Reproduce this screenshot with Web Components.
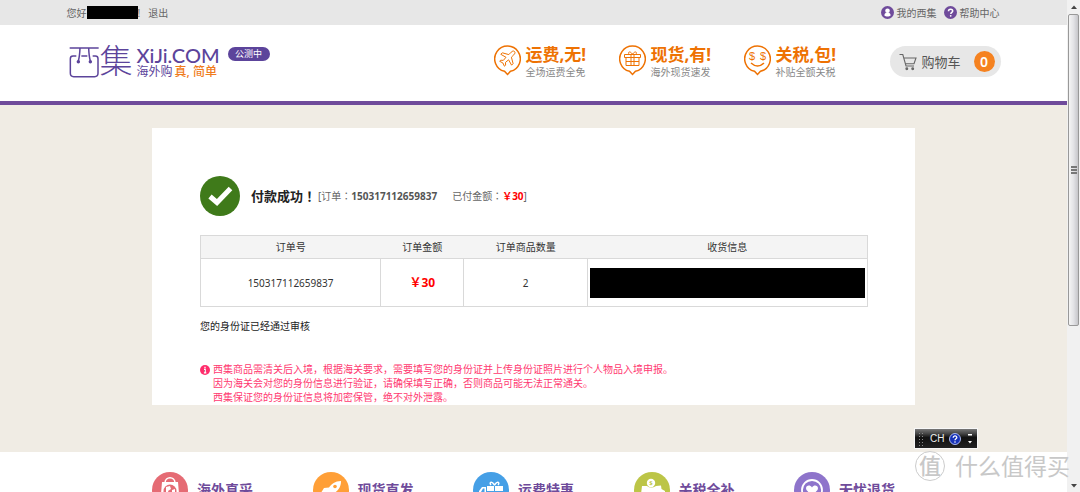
<!DOCTYPE html>
<html lang="zh-CN">
<head>
<meta charset="utf-8">
<title>西集 - 付款成功</title>
<style>
  html, body { margin: 0; height: 100%; }
  body { overflow: hidden; font-family: "Noto Sans", "Noto Sans CJK SC", sans-serif; font-size: 10px; line-height: 14px; color: #333; background: #fff; }
</style>
</head>
<body>
<xj-app></xj-app>
<script>
const define = (name, html) => customElements.define(name, class extends HTMLElement {
  constructor() {
    super();
    const t = document.createElement('template');
    t.innerHTML = html;
    this.attachShadow({ mode: 'open' }).append(t.content.cloneNode(true));
  }
});

define('xj-topbar', `
<style>
  :host { display: block; background: #e7e7e7; color: #666; }
  .in { max-width: 934px; height: 25px; margin: 0 auto; display: flex; align-items: center; }
  .mask { width: 51px; height: 13px; background: #000; }
  a { color: inherit; text-decoration: none; display: flex; align-items: center; gap: 3px; }
  .out { margin-left: 8px; margin-right: auto; }
  .help { margin-left: 7px; margin-right: 1px; }
  svg { width: 13px; height: 13px; }
</style>
<div class="in">
  <span>您好</span><span class="mask"></span><span>!</span>
  <a class="out" href="#">退出</a>
  <a href="#"><svg viewBox="0 0 13 13"><circle cx="6.5" cy="6.5" r="6.5" fill="#6f4b9b"/><circle cx="6.5" cy="4.8" r="2.3" fill="#fff"/><path d="M3.400 9.400c0-2.200 1.300-3 3.100-3s3.100.8 3.100 3c-1.400 1.400-4.800 1.400-6.200 0z" fill="#fff"/></svg><span>我的西集</span></a>
  <a class="help" href="#"><svg viewBox="0 0 13 13"><circle cx="6.500" cy="6.500" r="6.500" fill="#6f4b9b"/><path d="M4.500 5.200c0-2.800 4.200-2.600 4.200-.2 0 1.300-1.900 1.400-1.900 3" fill="none" stroke="#fff" stroke-width="1.500"/><circle cx="6.700" cy="9.800" r=".9" fill="#fff"/></svg><span>帮助中心</span></a>
</div>`);

define('xj-logo', `
<style>
  :host { display: block; color: #5c449b; }
  a { display: flex; color: inherit; text-decoration: none; }
  svg { width: 31px; height: 33px; }
  .ji { width: 32px; font-size: 33px; line-height: 32px; font-weight: 300; }
  .name { display: flex; flex-direction: column; margin-left: 5px; }
  .en { font: 500 20px/20px Lato, sans-serif; }
  .zh { font-size: 12px; line-height: 14px; display: flex; gap: 2px; }
  b { font-weight: 500; color: #f07c1c; }
  .beta { width: 42px; height: 14px; margin: 2px 0 0 8px; border-radius: 7px; background: #5c449b; color: #fff; font-size: 9px; line-height: 14px; text-align: center; }
</style>
<a href="#">
  <svg viewBox="0 0 93 99" fill="none" stroke="#5c449b" stroke-width="4.500"><path d="M2 9H89M33 9Q32 34 28 48M59 9Q60 34 64 48"/><path d="M22 33H12Q4 33 4 41V85Q4 95 14 95H77Q87 95 87 85V41Q87 33 79 33H71M37 33H55" /><circle cx="28" cy="50" r="3" fill="#5c449b"/><circle cx="64" cy="50" r="3" fill="#5c449b"/></svg>
  <span class="ji">集</span>
  <span class="name"><span class="en">XiJi.COM</span><span class="zh"><span>海外购</span><b>真, 简单</b></span></span>
  <span class="beta">公测中</span>
</a>`);

define('xj-feature', `
<style>
  :host { display: flex; gap: 5px; width: 93px; white-space: nowrap; }
  .t { display: flex; flex-direction: column; }
  .big { font-size: 17px; line-height: 20px; font-weight: 700; color: #ee7203; }
  .sub { color: #888; }
</style>
<slot name="icon"></slot>
<span class="t"><span class="big"><slot name="title"></slot></span><span class="sub"><slot></slot></span></span>`);

define('xj-cart', `
<style>
  :host { display: block; }
  a { box-sizing: border-box; width: 111px; height: 31px; padding: 0 6px 0 9px; border-radius: 16px; background: #e7e7e7; color: #555; display: flex; align-items: center; font-size: 13px; text-decoration: none; }
  svg { width: 18px; height: 18px; margin-right: 5px; }
  .n { width: 21px; height: 21px; margin-left: auto; border-radius: 50%; background: #f58220; color: #fff; font-size: 14px; font-weight: 600; line-height: 21px; text-align: center; }
</style>
<a href="#"><svg viewBox="0 0 18 18" fill="none" stroke="#666" stroke-width="1.100"><path d="M.5 1.500H3.800L7 13H15M4.800 5H17L15 10.800H6.300"/><circle cx="7.800" cy="15.800" r=".9" fill="#666"/><circle cx="13.700" cy="15.800" r=".9" fill="#666"/></svg><span>购物车</span><span class="n">0</span></a>`);

define('xj-header', `
<style>
  :host { display: block; background: #fff; border-bottom: 4px solid #6f4b9b; }
  .in { max-width: 932px; height: 76px; margin: 0 auto; padding-left: 2px; display: flex; align-items: flex-start; }
  xj-logo { margin-top: 20px; }
  .f { display: flex; gap: 32px; margin: 20px 53px 0 auto; }
  xj-cart { margin-top: 21px; }
  svg { width: 27px; height: 31px; fill: none; stroke: #ee7203; }
  text { font: 500 11px "Liberation Sans", sans-serif; fill: #ee7203; stroke: none; }
</style>
<div class="in">
  <xj-logo></xj-logo>
  <div class="f">
    <xj-feature><svg slot="icon" viewBox="0 0 27 31"><path d="M10.500 26.300A12.800 12.800 0 1 1 16.500 26.300L13.500 29.500Z" stroke-width="1.500"/><path d="M20.500 6.500c-1-1-2.300-.3-3.300.7L14.800 9.600 8.300 7.800 6.800 9.300 12 12.300 9.300 15.400 6.700 15.200 5.700 16.300 8.800 17.900 10.400 21.200 11.600 20.200 11.500 17.400 14.600 14.800 17.600 20.200 19.100 18.600 17.400 12.200 19.800 9.800C20.800 8.800 21.500 7.500 20.500 6.500Z" stroke-width="1"/></svg><span slot="title">运费,无!</span>全场运费全免</xj-feature>
    <xj-feature><svg slot="icon" viewBox="0 0 27 31"><path d="M10.500 26.300A12.800 12.800 0 1 1 16.500 26.300L13.500 29.500Z" stroke-width="1.500"/><path d="M5.500 9.500H21.500V12.500H5.500ZM7 12.500V20.500H20V12.500M7 16.500H20M12 9.500V20.500M15 9.500V20.500M13.500 9.200C11 5.500 8.500 7 10 9.200M13.500 9.200C16 5.500 18.500 7 17 9.200"/></svg><span slot="title">现货,有!</span>海外现货速发</xj-feature>
    <xj-feature><svg slot="icon" viewBox="0 0 27 31"><path d="M10.500 26.300A12.800 12.800 0 1 1 16.500 26.300L13.500 29.500Z" stroke-width="1.500"/><path d="M7 18Q13.500 24 20 18" stroke-width="1.400"/><text x="5" y="15">$</text><text x="16" y="15">$</text></svg><span slot="title">关税,包!</span>补贴全额关税</xj-feature>
  </div>
  <xj-cart></xj-cart>
</div>`);

define('xj-orders', `
<style>
  :host { display: block; }
  table { width: 100%; border-collapse: collapse; table-layout: fixed; text-align: center; }
  th, td { padding: 0 2px; }
  tr > * { border: 1px solid #d9d9d9; }
  th { height: 22px; background: #f4f4f4; font-weight: 400; border-left: 0; border-right: 0; }
  th:first-child { border-left: 1px solid #d9d9d9; }
  th:last-child { border-right: 1px solid #d9d9d9; }
  td { height: 47px; }
  .p { color: #f00; font-size: 12px; font-weight: 700; }
  .mask { height: 30px; background: #000; }
</style>
<table>
  <colgroup><col style="width:27%"><col style="width:12.500%"><col style="width:18.500%"><col></colgroup>
  <thead><tr><th>订单号</th><th>订单金额</th><th>订单商品数量</th><th>收货信息</th></tr></thead>
  <tbody><tr><td>150317112659837</td><td class="p">￥30</td><td>2</td><td><div class="mask"></div></td></tr></tbody>
</table>`);

define('xj-notice', `
<style>
  :host { display: flex; align-items: flex-start; gap: 3px; color: #ff3971; white-space: nowrap; }
  svg { width: 10px; height: 10px; margin-top: 3px; flex: none; }
</style>
<svg viewBox="0 0 10 10"><circle cx="5" cy="5" r="5" fill="#ff2d6c"/><path d="M5 1.800V3.200M4 4.400H5.200V7.800M3.900 7.800H6.300" stroke="#fff" stroke-width="1.300"/></svg>
<div><slot></slot></div>`);

define('xj-result', `
<style>
  :host { display: block; background: #f0ece4; padding: 23px 0 47px; }
  .card { box-sizing: border-box; max-width: 763px; margin: 0 auto; padding: 48px 47px 1px 48px; background: #fff; }
  .ok { display: flex; align-items: center; color: #666; }
  .ok svg { width: 40px; height: 40px; margin-right: 11px; }
  h1 { margin: 0 2px 0 0; font-size: 13px; font-weight: 700; color: #222; }
  .amt { margin-left: 15px; }
  .mid { font-family: "Noto Sans CJK TC", sans-serif; }
  em { font-style: normal; font-weight: 700; color: #f00; }
  b { color: #555; }
  xj-orders { margin-top: 19px; }
  p { margin: 12px 0 29px; color: #222; }
</style>
<div class="card">
  <div class="ok">
    <svg viewBox="0 0 40 40"><circle cx="20" cy="20" r="20" fill="#3f7a1a"/><path d="M10 20.500L17 26.500 30.500 12.500" fill="none" stroke="#fff" stroke-width="5"/></svg>
    <h1>付款成功<span class="mid" lang="zh-TW">！</span></h1><span>[订单<span class="mid" lang="zh-TW">：</span><b>150317112659837</b></span><span class="amt">已付金额<span class="mid" lang="zh-TW">：</span><em>￥30</em>]</span>
  </div>
  <xj-orders></xj-orders>
  <p>您的身份证已经通过审核</p>
  <xj-notice>西集商品需清关后入境，根据海关要求，需要填写您的身份证并上传身份证照片进行个人物品入境申报。<br>因为海关会对您的身份信息进行验证，请确保填写正确，否则商品可能无法正常通关。<br>西集保证您的身份证信息将加密保管，绝不对外泄露。</xj-notice>
</div>`);

define('xj-promise', `
<style>
  :host { display: flex; align-items: center; gap: 9px; color: #6f4b9b; font-size: 14px; font-weight: 700; white-space: nowrap; }
</style>
<slot name="icon"></slot><span><slot></slot></span>`);

define('xj-footer', `
<style>
  :host { display: block; background: #fff; }
  .in { box-sizing: border-box; max-width: 763px; margin: 0 auto; padding: 20px 20px 20px 0; display: flex; justify-content: space-between; }
  svg { width: 36px; height: 36px; }
  text { font: 700 6px "Noto Sans", sans-serif; fill: #bcc547; }
</style>
<div class="in">
  <xj-promise><svg slot="icon" viewBox="0 0 36 36"><circle cx="18" cy="18" r="18" fill="#e56b74"/><path d="M13 11C13 4 23 4 23 11" fill="none" stroke="#fff" stroke-width="1.500"/><path d="M10 10H26L27.500 28H8.500Z" fill="#fff"/><circle cx="18" cy="19" r="6.500" fill="#e56b74"/><path d="M14 15l4-1 1 3-3 2 1 3-3-2zM20 18l3-1v4l-3 2z" fill="#fff"/></svg>海外真采</xj-promise>
  <xj-promise><svg slot="icon" viewBox="0 0 36 36"><circle cx="18" cy="18" r="18" fill="#ff9f37"/><path d="M28 9C22 9 18.500 12 16 15.500L11 16 8.500 20 13 20 17 24 17 28.500 21 26 21.500 21C25.500 18 28 15 28 9Z" fill="#fff"/><circle cx="22" cy="14.500" r="1.800" fill="#ff9f37"/></svg>现货直发</xj-promise>
  <xj-promise><svg slot="icon" viewBox="0 0 36 36"><circle cx="18" cy="18" r="18" fill="#459fe6"/><path d="M14 14H21V19H14ZM22 14H30V19H22ZM14 20H21V26H14ZM22 20H30V26H22ZM6 26V19L9 15H13V26Z" fill="#fff"/><path d="M21.500 13C18 8 16 11 18 13M21.500 13C25 8 27 11 25 13" stroke="#fff" stroke-width="1.500" fill="none"/><path d="M8 20L10 16.500H11.500V20Z" fill="#459fe6"/></svg>运费特惠</xj-promise>
  <xj-promise><svg slot="icon" viewBox="0 0 36 36"><circle cx="18" cy="18" r="18" fill="#bcc547"/><path d="M8 14H13Q17 17 22 14L27 13.500 27.500 17 31 19V23L26 28H11L7 22Z" fill="#fff"/><circle cx="17" cy="11" r="4.200" fill="#fff"/><text x="15.300" y="13.200">$</text></svg>关税全补</xj-promise>
  <xj-promise><svg slot="icon" viewBox="0 0 36 36"><circle cx="18" cy="18" r="18" fill="#8e74cb"/><circle cx="18" cy="18" r="10" fill="none" stroke="#fff" stroke-width="1.800"/><path d="M18 24L12.500 18C10.500 14 15.500 11.500 18 15.500 20.500 11.500 25.500 14 23.500 18Z" fill="#fff"/></svg>无忧退货</xj-promise>
</div>`);

define('xj-scrollbar', `
<style>
  :host { flex: none; width: 13px; height: 100vh; background: #f1f1f1; display: flex; flex-direction: column; align-items: center; box-sizing: border-box; padding: 0 1px; }
  .a { width: 12px; height: 14px; flex: none; }
  .thumb { box-sizing: border-box; width: 100%; flex: 0 0 63.500%; border: 1px solid #999; border-radius: 2px; background: linear-gradient(90deg, #f5f5f5, #e3e3e6 50%, #c6c6ca); display: flex; flex-direction: column; align-items: center; justify-content: center; gap: 1px; }
  i { width: 6px; height: 2px; background: #777; }
  .rest { flex: 1; }
</style>
<svg class="a" viewBox="0 0 12 14"><path d="M3 9H9L6 5.500Z" fill="#444"/></svg>
<div class="thumb"><i></i><i></i><i></i></div>
<div class="rest"></div>
<svg class="a" viewBox="0 0 12 14"><path d="M3 6H9L6 9.500Z" fill="#444"/></svg>`);

define('xj-langbar', `
<style>
  :host { box-sizing: border-box; width: 64px; height: 21px; padding: 0 4px 0 3px; border: 1px solid #f8f8f8; background: linear-gradient(#777, #444 25%, #111 45%, #222); color: #eee; display: flex; align-items: center; font: 10px/12px "Liberation Sans", sans-serif; }
  .grip { width: 7px; height: 14px; margin-right: 5px; background: radial-gradient(circle, #888 0 1px, transparent 1px) 0 0 / 3px 3px; }
  svg { width: 12px; height: 12px; margin-left: 5px; }
  .m { width: 6px; margin-left: auto; }
</style>
<span class="grip"></span><span>CH</span>
<svg viewBox="0 0 12 12"><circle cx="6" cy="6" r="5.500" fill="#1732b8" stroke="#a9b8ee"/><path d="M4.200 4.800C4.200 2.200 8 2.500 7.800 4.600 7.700 5.800 6 5.800 6 7.300" fill="none" stroke="#fff" stroke-width="1.300"/><circle cx="6" cy="9" r=".8" fill="#fff"/></svg>
<svg class="m" viewBox="0 0 6 12"><path d="M1 1H5V2.500H1ZM1 8H5L3 10.500Z" fill="#fff"/></svg>`);

define('xj-watermark', `
<style>
  :host { display: flex; align-items: center; gap: 10px; color: #c8c8c8; font-size: 23px; line-height: 30px; white-space: nowrap; text-shadow: 0 0 1px #fff; }
  .seal { width: 30px; height: 30px; border-radius: 50%; border: 1px solid #ccc; box-sizing: border-box; background: #fff; font-size: 22px; line-height: 27px; text-align: center; font-weight: 500; }
</style>
<span class="seal">值</span><span>什么值得买</span>`);

define('xj-app', `
<style>
  :host { display: flex; position: relative; height: 100vh; overflow: hidden; }
  main { flex: 1; min-width: 0; }
  xj-langbar { position: absolute; right: 102px; bottom: 43px; }
  xj-watermark { position: absolute; right: 10px; bottom: 11px; }
</style>
<main>
  <xj-topbar></xj-topbar>
  <xj-header></xj-header>
  <xj-result></xj-result>
  <xj-footer></xj-footer>
</main>
<xj-scrollbar></xj-scrollbar>
<xj-watermark></xj-watermark>
<xj-langbar></xj-langbar>`);
</script>
</body>
</html>
